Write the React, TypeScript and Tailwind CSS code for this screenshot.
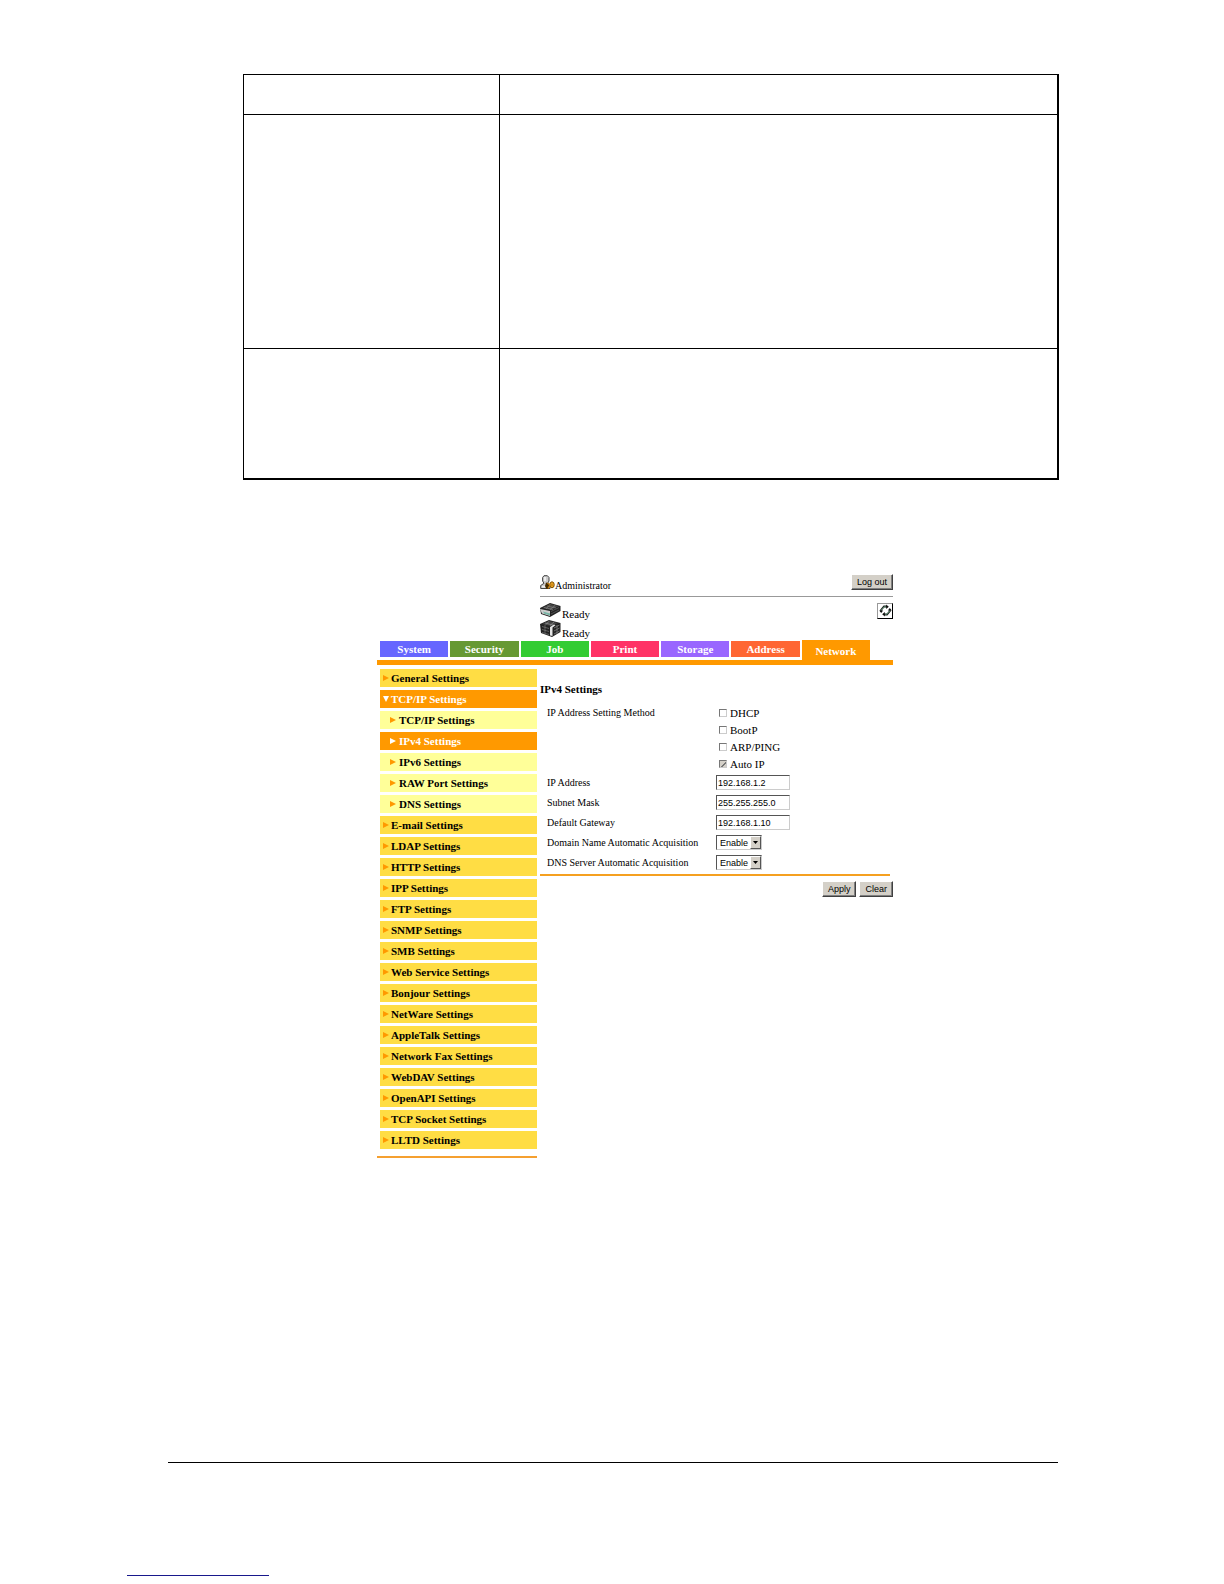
import { ReactNode } from "react";
import { clsx } from "clsx";

const TABS = [
  { label: "System", color: "bg-[#6666ff]" },
  { label: "Security", color: "bg-[#669933]" },
  { label: "Job", color: "bg-[#33cc33]" },
  { label: "Print", color: "bg-[#ff3366]" },
  { label: "Storage", color: "bg-[#9966ff]" },
  { label: "Address", color: "bg-[#ff6633]" },
  { label: "Network", color: "bg-[#ff9900]", active: true },
];

const MENU: { label: string; sub?: boolean; open?: boolean; active?: boolean }[] = [
  { label: "General Settings" },
  { label: "TCP/IP Settings", open: true },
  { label: "TCP/IP Settings", sub: true },
  { label: "IPv4 Settings", sub: true, active: true },
  { label: "IPv6 Settings", sub: true },
  { label: "RAW Port Settings", sub: true },
  { label: "DNS Settings", sub: true },
  { label: "E-mail Settings" },
  { label: "LDAP Settings" },
  { label: "HTTP Settings" },
  { label: "IPP Settings" },
  { label: "FTP Settings" },
  { label: "SNMP Settings" },
  { label: "SMB Settings" },
  { label: "Web Service Settings" },
  { label: "Bonjour Settings" },
  { label: "NetWare Settings" },
  { label: "AppleTalk Settings" },
  { label: "Network Fax Settings" },
  { label: "WebDAV Settings" },
  { label: "OpenAPI Settings" },
  { label: "TCP Socket Settings" },
  { label: "LLTD Settings" },
];

const METHODS = [
  { id: "dhcp", label: "DHCP" },
  { id: "bootp", label: "BootP" },
  { id: "arp", label: "ARP/PING" },
  { id: "autoip", label: "Auto IP", locked: true },
];

const ADDRESSES = [
  { id: "ip", label: "IP Address", value: "192.168.1.2" },
  { id: "mask", label: "Subnet Mask", value: "255.255.255.0" },
  { id: "gateway", label: "Default Gateway", value: "192.168.1.10" },
];

const ACQUISITION = [
  { id: "domain", label: "Domain Name Automatic Acquisition" },
  { id: "dns", label: "DNS Server Automatic Acquisition" },
];

function UserIcon() {
  return (
    <svg width="15" height="15" viewBox="0 0 15 15" aria-hidden="true">
      <path d="M.7 13.5V10.5L4 8.3 2.6 6V2.5L4 .7h3.4L9 2.5V6L7.6 8.3 10 10v3.5z" fill="#ccc" stroke="#444" />
      <path d="M4 2h2v4H4zM2 11h3v1.5H2z" fill="#eee" />
      <path d="M6 7.5l3 1v5.5H6.5L5 11z" fill="#442a00" />
      <ellipse cx="12" cy="9.8" rx="2.2" ry="3" fill="#f5b22c" stroke="#7a4a00" />
      <path d="M7.5 8l2.5 2-2 3.5M12 8.5v3" stroke="#c88010" strokeWidth="1.4" fill="none" />
    </svg>
  );
}

function ScannerIcon() {
  return (
    <svg width="21" height="15" viewBox="0 0 21 15" aria-hidden="true">
      <path d="M0 5L10 0l10.5 3v5L10 14 1 11z" fill="#222" />
      <path d="M2 5l8-4 9 2-8 4z" fill="#444" />
      <path d="M4 4.5l9 2M7 3l9 2M10 1.5L6 6M15 2.5L10 6.5" stroke="#888" strokeWidth=".6" />
      <path d="M0 6l10 2v5L2 10.5z" fill="#ccc" />
      <path d="M3 8.5l7 2v2L4 10.5z" fill="#77b5a5" />
      <path d="M11 8.5l8-4M11 11l8-4" stroke="#666" strokeWidth=".7" />
    </svg>
  );
}

function PrinterIcon() {
  return (
    <svg width="21" height="17" viewBox="0 0 21 17" aria-hidden="true">
      <path d="M0 4L9 0l11.5 3v9L12 17 1 13z" fill="#222" />
      <path d="M2 4l7-3 9 2-7 3z" fill="#444" />
      <path d="M5 3l8 2M9 1.3L6 4.5M14 2l-4 3.5" stroke="#999" strokeWidth=".6" />
      <path d="M10 7l4-2.5 1.5.7-3 2.3V16l-2.5-.6z" fill="#e4e4e4" />
      <path d="M2 6.5l7 2M2 9.5l7 2M2 12.5l7 2M5 5v8" stroke="#777" strokeWidth=".7" />
      <path d="M14 8l5.5-3M14 11l5.5-3M14 14l5.5-3M17 5v9" stroke="#888" strokeWidth=".7" />
    </svg>
  );
}

function RefreshIcon() {
  return (
    <svg width="13" height="13" viewBox="0 0 13 13" fill="none" aria-hidden="true">
      <path d="M2 7.5V6l3-3.5h3M11 5.5V7l-3 3.5H5" stroke="#222" strokeWidth="1.8" />
      <path d="M2.2 7V6.1L5.1 2.8H7M10.8 6v.9L7.9 10.2H6" stroke="#5c9e78" strokeWidth=".8" />
      <path d="M7.2.5v4.4L9.8 2.7zM5.8 8.1v4.4L3.2 10.3z" fill="#111" />
      <path d="M.2 6.5h4L2.2 9zM8.8 6.5h4L10.8 4z" fill="#111" />
    </svg>
  );
}

function Marker({ open, light }: { open?: boolean; light?: boolean }) {
  return (
    <svg
      width="6"
      height="6"
      viewBox="0 0 6 6"
      fill={open || light ? "#fff" : "#ff9900"}
      className="shrink-0"
      aria-hidden="true"
    >
      <path d={open ? "M0 0h6L3 6z" : "M0 0l6 3-6 3z"} />
    </svg>
  );
}

function ClassicButton({ children }: { children: ReactNode }) {
  return (
    <button
      type="button"
      className="h-4 px-[5px] border border-t-white border-l-white border-r-[#404040] border-b-[#404040] bg-[#d4d0c8] shadow-[inset_-1px_-1px_0_#808080] font-['Liberation_Sans',sans-serif] text-[9px] leading-3 text-black"
    >
      {children}
    </button>
  );
}

/* Blank three-row table at the top of the page */
function BlankTable() {
  return (
    <table className="w-full table-fixed border-collapse border border-r-2 border-b-2 border-black">
      <colgroup>
        <col className="w-[256px]" />
        <col />
      </colgroup>
      <tbody>
        <tr className="h-10">
          <td className="border border-black" />
          <td className="border border-black" />
        </tr>
        <tr className="h-[234px]">
          <td className="border border-black" />
          <td className="border border-black" />
        </tr>
        <tr className="h-[130px]">
          <td className="border border-black" />
          <td className="border border-black" />
        </tr>
      </tbody>
    </table>
  );
}

function StatusHeader() {
  return (
    <header className="pl-[163px] text-[11px] leading-2">
      <div className="flex justify-between pb-[6px] border-b border-[#999]">
        <div className="flex items-end">
          <UserIcon />
          <span className="text-[10px]">Administrator</span>
        </div>
        <ClassicButton>Log out</ClassicButton>
      </div>
      <div className="flex justify-between pt-[6px] pb-[3px]">
        <div className="flex flex-col gap-[2px]">
          <div className="flex items-end gap-px">
            <ScannerIcon />
            <span>Ready</span>
          </div>
          <div className="flex items-end gap-px">
            <PrinterIcon />
            <span>Ready</span>
          </div>
        </div>
        <button
          type="button"
          aria-label="Refresh"
          className="flex items-center justify-center w-4 h-4 border border-t-[#999] border-l-[#999] border-r-black border-b-black"
        >
          <RefreshIcon />
        </button>
      </div>
    </header>
  );
}

function TabBar() {
  return (
    <nav className="grid grid-cols-7 gap-[2px] h-5 pl-[3px] pr-[23px]">
      {TABS.map((tab) => (
        <a
          key={tab.label}
          href="#"
          className={clsx(
            "flex items-center justify-center text-[11px] leading-4 font-bold text-white",
            tab.color,
            tab.active ? "pt-[2px]" : "mt-px mb-[3px]"
          )}
        >
          {tab.label}
        </a>
      ))}
    </nav>
  );
}

function SideMenu() {
  return (
    <nav className="w-[160px] shrink-0 pt-1 pb-[7px] border-b-2 border-[#f5a030] self-start">
      <ul className="flex flex-col gap-[3px] pl-[3px]">
        {MENU.map((item, i) => (
          <li key={i}>
            <a
              href="#"
              className={clsx(
                "flex items-center h-[18px] text-[11px] leading-4 font-bold",
                item.sub ? "pl-[10px] gap-[3px]" : "pl-[3px] gap-[2px]",
                item.active || item.open
                  ? "bg-[#ff9900] text-white"
                  : item.sub
                    ? "bg-[#ffff99] text-black"
                    : "bg-[#ffdd44] text-black"
              )}
            >
              <Marker open={item.open} light={item.active} />
              {item.label}
            </a>
          </li>
        ))}
      </ul>
    </nav>
  );
}

function SettingsForm() {
  return (
    <form className="flex-1 min-w-0 pl-[3px] pt-4 text-[10px] leading-4">
      <h1 className="text-[11px] leading-4 font-bold">IPv4 Settings</h1>
      <div className="mr-[3px] mt-2 pl-[7px] pb-px border-b-2 border-[#f5a020]">
        <div role="group" aria-labelledby="method" className="flex">
          <span id="method" className="w-[169px] shrink-0">
            IP Address Setting Method
          </span>
          <div className="pl-[3px]">
            {METHODS.map((m) => (
              <div key={m.id} className="flex items-center gap-[3px] h-[17px] text-[11px]">
                <input
                  id={m.id}
                  type="checkbox"
                  defaultChecked={m.locked}
                  disabled={m.locked}
                  className="appearance-none w-2 h-2 border border-t-[#777] border-l-[#777] border-r-[#ccc] border-b-[#ccc] disabled:bg-[#d4d0c8] disabled:bg-[linear-gradient(135deg,transparent_55%,#777_55%,#777_70%,transparent_70%)]"
                />
                <label htmlFor={m.id}>{m.label}</label>
              </div>
            ))}
          </div>
        </div>
        {ADDRESSES.map((a) => (
          <div key={a.id} className="flex items-center h-5">
            <label htmlFor={a.id} className="w-[169px] shrink-0">
              {a.label}
            </label>
            <input
              id={a.id}
              type="text"
              defaultValue={a.value}
              className="w-[74px] h-[15px] px-px border border-t-[#555] border-l-[#555] border-r-[#ccc] border-b-[#ccc] font-['Liberation_Sans',sans-serif] text-[9px] leading-3"
            />
          </div>
        ))}
        {ACQUISITION.map((s) => (
          <div key={s.id} className="flex items-center h-5">
            <label htmlFor={s.id} className="w-[169px] shrink-0">
              {s.label}
            </label>
            <div className="relative flex">
              <select
                id={s.id}
                className="appearance-none w-[46px] h-[15px] pl-[3px] border border-t-[#555] border-l-[#555] border-r-[#ccc] border-b-[#ccc] font-['Liberation_Sans',sans-serif] text-[9px] leading-3"
              >
                <option>Enable</option>
                <option>Disable</option>
              </select>
              <span className="absolute right-px top-px flex items-center justify-center w-[11px] h-[13px] pointer-events-none bg-[#d4d0c8] border border-t-white border-l-white border-r-[#555] border-b-[#555]">
                <svg width="5" height="3" viewBox="0 0 5 3" aria-hidden="true">
                  <path d="M0 0h5L2.5 3z" />
                </svg>
              </span>
            </div>
          </div>
        ))}
      </div>
      <div className="flex justify-end gap-[3px] pt-[5px]">
        <ClassicButton>Apply</ClassicButton>
        <ClassicButton>Clear</ClassicButton>
      </div>
    </form>
  );
}

export default function App() {
  return (
    <div className="min-h-screen flex flex-col bg-white text-black font-['Liberation_Serif',serif]">
      <div className="pl-[243px] pr-[165px] pt-[74px]">
        <BlankTable />
      </div>
      <main className="w-full max-w-[893px] pl-[377px] pt-[94px]">
        <StatusHeader />
        <TabBar />
        <div className="h-[5px] bg-[#ff9900]" />
        <div className="flex">
          <SideMenu />
          <SettingsForm />
        </div>
      </main>
      <footer className="mt-auto pb-2">
        <hr className="ml-[168px] mr-[166px] border-black" />
        <div className="mt-28 ml-[127px] w-[142px] h-px bg-[#18188c]" />
      </footer>
    </div>
  );
}
